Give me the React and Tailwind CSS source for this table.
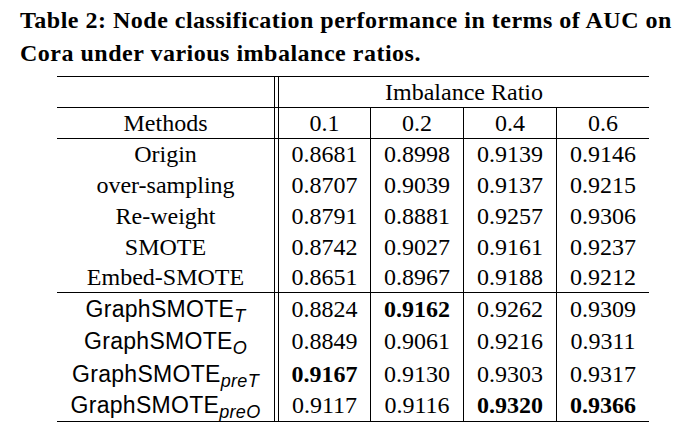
const rowsA = [
  ['Origin', '0.8681', '0.8998', '0.9139', '0.9146'],
  ['over-sampling', '0.8707', '0.9039', '0.9137', '0.9215'],
  ['Re-weight', '0.8791', '0.8881', '0.9257', '0.9306'],
  ['SMOTE', '0.8742', '0.9027', '0.9161', '0.9237'],
  ['Embed-SMOTE', '0.8651', '0.8967', '0.9188', '0.9212'],
];

// [subscript, values, bold flags]
const rowsB = [
  ['T', ['0.8824', '0.9162', '0.9262', '0.9309'], [0, 1, 0, 0]],
  ['O', ['0.8849', '0.9061', '0.9216', '0.9311'], [0, 0, 0, 0]],
  ['preT', ['0.9167', '0.9130', '0.9303', '0.9317'], [1, 0, 0, 0]],
  ['preO', ['0.9117', '0.9116', '0.9320', '0.9366'], [0, 0, 1, 1]],
];

const serif = { fontFamily: '"Liberation Serif", "Times New Roman", serif' };

function Gap({ className = '' }) {
  return <td className={`w-[4px] p-0 border-r border-black ${className}`} />;
}

const cell = 'p-0 text-[24px] leading-none border-black';

export default function App() {
  return (
    <div className="w-[686px] h-[430px] bg-white text-black overflow-hidden relative" style={serif}>
      <div className="pl-[20px] pt-[4px] text-[24px] leading-[33px] font-bold tracking-[0.5px] whitespace-nowrap">
        <div>Table 2: Node classification performance in terms of AUC on</div>
        <div>Cora under various imbalance ratios.</div>
      </div>

      <table className="ml-[57px] mt-[6px] border-separate border-spacing-0 text-center" style={serif}>
        <tbody>
          <tr className="h-[32px]">
            <td className={`w-[218px] ${cell} border-t-[1.5px] border-b border-r`} />
            <Gap className="border-t-[1.5px] border-b" />
            <td colSpan={4} className={`${cell} border-t-[1.5px] border-b`}>Imbalance Ratio</td>
          </tr>
          <tr className="h-[31px]">
            <td className={`${cell} border-b border-r`}>Methods</td>
            <Gap className="border-b" />
            <td className={`w-[92px] ${cell} border-b border-r`}>0.1</td>
            <td className={`w-[93px] ${cell} border-b border-r`}>0.2</td>
            <td className={`w-[93px] ${cell} border-b border-r`}>0.4</td>
            <td className={`w-[92px] ${cell} border-b`}>0.6</td>
          </tr>
          {rowsA.map((r, i) => (
            <tr key={r[0]} className="h-[30.8px]">
              <td className={`${cell} border-r ${i === rowsA.length - 1 ? 'border-b' : ''}`}>{r[0]}</td>
              <Gap className={i === rowsA.length - 1 ? 'border-b' : ''} />
              {r.slice(1).map((v, j) => (
                <td key={j} className={`${cell} ${j < 3 ? 'border-r' : ''} ${i === rowsA.length - 1 ? 'border-b' : ''}`}>{v}</td>
              ))}
            </tr>
          ))}
          {rowsB.map(([sub, vals, bold], i) => (
            <tr key={sub} className="h-[32.25px]">
              <td className={`${cell} border-r ${i === rowsB.length - 1 ? 'border-b-[1.5px]' : ''}`}>
                <span style={{ fontFamily: '"Liberation Sans", Arial, sans-serif' }} className="text-[23px] tracking-[0.3px]">
                  GraphSMOTE
                  <sub className="italic text-[18px] relative top-[5px] align-baseline">{sub}</sub>
                </span>
              </td>
              <Gap className={i === rowsB.length - 1 ? 'border-b-[1.5px]' : ''} />
              {vals.map((v, j) => (
                <td key={j} className={`${cell} ${j < 3 ? 'border-r' : ''} ${bold[j] ? 'font-bold' : ''} ${i === rowsB.length - 1 ? 'border-b-[1.5px]' : ''}`}>{v}</td>
              ))}
            </tr>
          ))}
        </tbody>
      </table>
    </div>
  );
}
